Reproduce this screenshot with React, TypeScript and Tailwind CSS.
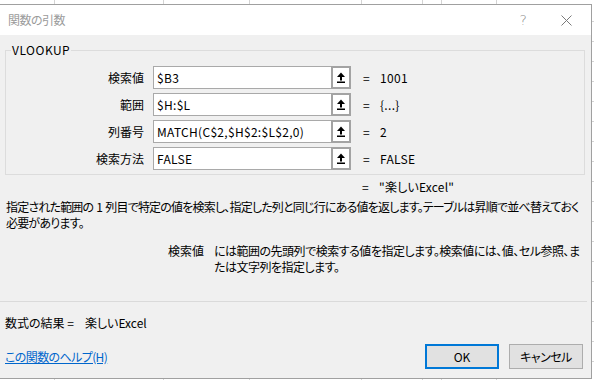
import React from "react";

const FONT = "font-['Noto_Sans_CJK_JP','Noto_Sans',sans-serif] [font-feature-settings:'palt']";

function RefArrow() {
  return (
    <svg width="10" height="11" viewBox="0 0 10 11">
      <polygon points="5,0.5 1,5 9,5" fill="#000" />
      <rect x="4" y="4.5" width="2" height="4" fill="#000" />
      <rect x="1" y="9.5" width="8" height="1.5" fill="#000" />
    </svg>
  );
}

function ArgRow({ label, value, result }: { label: string; value: string; result: string }) {
  return (
    <div className="flex items-center h-[23px]">
      <div className="w-[138px] text-right leading-[16px]">{label}</div>
      <div className="ml-[9px] w-[178px] h-[23px] bg-white border border-[#a9a9a9] border-r-0 flex items-center pl-[3px] leading-[16px] whitespace-nowrap overflow-hidden tracking-[0.3px]">
        {value}
      </div>
      <div className="w-[20px] h-[23px] border-2 border-[#a3a3a3] bg-white flex items-center justify-center">
        <RefArrow />
      </div>
      <div className="ml-[12px] w-[17px] leading-[16px]">=</div>
      <div className="leading-[16px] tracking-[0.3px]">{result}</div>
    </div>
  );
}

export default function App() {
  const vlines = [54, 163, 249, 361, 422, 441, 496];
  const hlines = [21, 41, 61, 81, 101, 121, 141, 161, 181, 201, 221, 241, 261, 281, 301, 321, 341, 361];
  return (
    <div className={`relative w-[594px] h-[380px] bg-white overflow-hidden text-[12px] text-black ${FONT}`}>
      <svg className="absolute inset-0" width="594" height="380">
        {vlines.map((x) => (
          <line key={x} x1={x + 0.5} y1={0} x2={x + 0.5} y2={380} stroke="#d4d4d4" />
        ))}
        {hlines.map((y) => (
          <line key={y} x1={0} y1={y + 0.5} x2={594} y2={y + 0.5} stroke="#d4d4d4" />
        ))}
      </svg>
      <div className="absolute left-[-1px] top-[4px] w-[593px] h-[375px] border border-[#a0a0a0] bg-[#f0f0f0] flex flex-col">
        <div className="h-[30px] bg-white flex items-center shrink-0">
          <div className="ml-[8px] text-[#9b9b9b] leading-[16px] tracking-[-0.5px]">関数の引数</div>
          <div className="ml-auto mr-[34px] text-[#8a8a8a] text-[14px] font-['DejaVu_Sans',sans-serif] font-extralight">?</div>
          <svg width="11" height="11" viewBox="0 0 11 11" className="mr-[19px]">
            <line x1="0.5" y1="0.5" x2="10.5" y2="10.5" stroke="#7a7a7a" strokeWidth="1" />
            <line x1="10.5" y1="0.5" x2="0.5" y2="10.5" stroke="#7a7a7a" strokeWidth="1" />
          </svg>
        </div>
        <div className="flex flex-col">
          <fieldset className="mt-[7px] ml-[5px] w-[580px] border border-[#dcdcdc] pt-[8px] pb-[4px]">
            <legend className="ml-[5px] px-[1px] leading-[16px] tracking-[0.5px]">VLOOKUP</legend>
            <div className="flex flex-col gap-[4px]">
              <ArgRow label="検索値" value="$B3" result="1001" />
              <ArgRow label="範囲" value="$H:$L" result="{...}" />
              <ArgRow label="列番号" value="MATCH(C$2,$H$2:$L$2,0)" result="2" />
              <ArgRow label="検索方法" value="FALSE" result="FALSE" />
            </div>
          </fieldset>
          <div className="mt-[4px] flex leading-[16px] pl-[362px]">
            <div className="w-[17px]">=</div>
            <div className="tracking-[0.2px]">"楽しいExcel"</div>
          </div>
          <div className="mt-[4px] pl-[6px] leading-[16px] whitespace-nowrap tracking-[-0.8px]">
            指定された範囲の<span className="mx-[3px]">1</span>列目で特定の値を検索し、指定した列と同じ行にある値を返します。テーブルは昇順で並べ替えておく
            <br />
            必要があります。
          </div>
          <div className="mt-[12px] flex leading-[16px]">
            <div className="w-[204px] text-right">検索値</div>
            <div className="ml-[10px] whitespace-nowrap tracking-[-0.5px]">
              には範囲の先頭列で検索する値を指定します。検索値には、値、セル参照、ま
              <br />
              たは文字列を指定します。
            </div>
          </div>
          <div className="mt-[26px] h-px w-[587px] bg-[#dadada]" />
          <div className="mt-[13px] pl-[5px] leading-[16px] flex">
            <span>数式の結果 =</span>
            <span className="ml-[11px]">楽しいExcel</span>
          </div>
          <div className="mt-[13px] flex items-center">
            <a className="ml-[5px] text-[#0066cc] underline leading-[16px] mt-[1px] tracking-[-0.6px]" href="#">
              この関数のヘルプ(H)
            </a>
            <button className="ml-auto w-[74px] h-[25px] bg-[#e1e1e1] border-2 border-[#0078d7] leading-[16px]">
              OK
            </button>
            <button className="ml-[10px] mr-[8px] w-[74px] h-[25px] bg-[#e1e1e1] border border-[#adadad] leading-[16px] tracking-[-0.5px]">
              キャンセル
            </button>
          </div>
        </div>
      </div>
    </div>
  );
}
